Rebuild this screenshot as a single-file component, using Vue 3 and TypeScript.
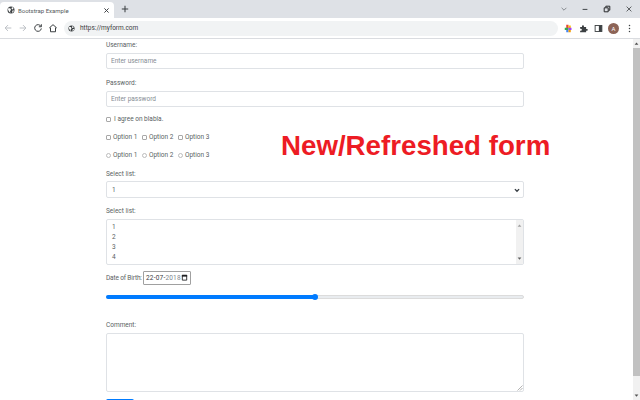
<script setup lang="ts">
const rows = ['Option 1', 'Option 2', 'Option 3']
</script>

<template>
  <div class="window">
    <div class="tabstrip">
      <div class="tab">
        <svg class="globe" viewBox="0 0 16 16"><circle cx="8" cy="8" r="7" fill="#3c4043"/><path d="M3 4l4 1 1 3-2 2 1 4-3-3-2-4zM10 2l3 2-1 3-3-1zM11 9l3 0-2 4-2 0z" fill="#fff"/></svg>
        <span class="tab-title">Bootstrap Example</span>
        <svg class="tab-x" viewBox="0 0 10 10"><path d="M2 2l6 6M8 2l-6 6" stroke="#3c4043" stroke-width="1.400"/></svg>
      </div>
      <svg class="plus" viewBox="0 0 10 10"><path d="M5 1v8M1 5h8" stroke="#3c4043" stroke-width="1.300"/></svg>
      <div class="spacer"></div>
      <svg class="win chev" viewBox="0 0 10 10"><path d="M2 3.500l3 3 3-3" fill="none" stroke="#70757a" stroke-width="1"/></svg>
      <svg class="win min" viewBox="0 0 10 10"><path d="M2 5.500h6" stroke="#3c4043" stroke-width="1.200"/></svg>
      <svg class="win rest" viewBox="0 0 10 10"><path d="M3.500 3V1.500h5v5H7M1.500 3.500h5v5h-5z" fill="none" stroke="#202124" stroke-width="1.200"/></svg>
      <svg class="win close" viewBox="0 0 10 10"><path d="M2 2l6 6M8 2l-6 6" stroke="#3c4043" stroke-width="1"/></svg>
    </div>
    <div class="toolbar">
      <svg class="nav first" viewBox="0 0 12 12"><path d="M10 6H2.500M6 2.500L2.500 6 6 9.500" fill="none" stroke="#bdc1c6" stroke-width="1.200"/></svg>
      <svg class="nav" viewBox="0 0 12 12"><path d="M2 6h7.500M6 2.500L9.500 6 6 9.500" fill="none" stroke="#bdc1c6" stroke-width="1.200"/></svg>
      <svg class="nav" viewBox="0 0 12 12"><path d="M9.500 4A4 4 0 1 0 10 6.500M10 1.500v3H7" fill="none" stroke="#3c4043" stroke-width="1.200"/></svg>
      <svg class="nav" viewBox="0 0 12 12"><path d="M1.500 6L6 2l4.500 4M3 5.500V10.500h6V5.500" fill="none" stroke="#3c4043" stroke-width="1.200"/></svg>
      <div class="omnibox">
        <svg class="omni-globe" viewBox="0 0 16 16"><circle cx="8" cy="8" r="7" fill="#3c4043"/><path d="M3 4l4 1 1 3-2 2 1 4-3-3-2-4zM10 2l3 2-1 3-3-1zM11 9l3 0-2 4-2 0z" fill="#fff"/></svg>
        <span class="url">https://myform.com</span>
      </div>
      <svg class="ext" viewBox="0 0 12 12">
        <rect x="3" y="1" width="3" height="5" fill="#ea4335"/><rect x="6" y="2" width="3" height="4" fill="#fbbc04"/>
        <rect x="1" y="5" width="5" height="3" fill="#34a853"/><rect x="6" y="5" width="4" height="3" fill="#a142f4"/>
        <rect x="3" y="8" width="3" height="3" fill="#4285f4"/><rect x="6" y="8" width="3" height="3" fill="#f29900"/>
      </svg>
      <svg class="ext" viewBox="0 0 12 12"><path d="M1.500 4H4V3a1.300 1.300 0 0 1 2.600 0v1H9.500v2.500h1a1.300 1.300 0 0 1 0 2.600h-1V11H1.500V9h1a1.300 1.300 0 0 0 0-2.600h-1z" fill="#3c4043"/></svg>
      <svg class="ext panel" viewBox="0 0 12 12"><rect x="1.500" y="2" width="9" height="8" fill="none" stroke="#3c4043" stroke-width="1.200"/><rect x="6.500" y="2" width="4" height="8" fill="#3c4043"/></svg>
      <div class="avatar">A</div>
      <svg class="dots" viewBox="0 0 4 12"><circle cx="2" cy="2" r="1" fill="#3c4043"/><circle cx="2" cy="6" r="1" fill="#3c4043"/><circle cx="2" cy="10" r="1" fill="#3c4043"/></svg>
    </div>
    <div class="viewport">
      <div class="page">
        <form class="form">
          <label class="lab">Username:</label>
          <input class="ctl text" placeholder="Enter username" />
          <label class="lab">Password:</label>
          <input class="ctl text tight" placeholder="Enter password" />
          <label class="line agree"><input type="checkbox" class="box" /><span>I agree on blabla.</span></label>
          <div class="line opts">
            <label v-for="o in rows" :key="'c' + o" class="opt"><input type="checkbox" class="box" /><span>{{ o }}</span></label>
          </div>
          <div class="line opts">
            <label v-for="o in rows" :key="'r' + o" class="opt"><input type="radio" name="r" class="box round" /><span>{{ o }}</span></label>
          </div>
          <label class="lab after-opts">Select list:</label>
          <div class="ctl selectbox">
            <span>1</span>
            <svg class="caret" viewBox="0 0 10 10"><path d="M1.500 3.500L5 7l3.500-3.500" fill="none" stroke="#343a40" stroke-width="2.200"/></svg>
          </div>
          <label class="lab">Select list:</label>
          <div class="ctl listbox">
            <div class="items"><div>1</div><div>2</div><div>3</div><div>4</div></div>
            <div class="list-scroll">
              <svg viewBox="0 0 6 4"><path d="M3 .5L5.500 3.500H.5z" fill="#a0a0a0"/></svg>
              <svg viewBox="0 0 6 4"><path d="M3 3.500L5.500 .5H.5z" fill="#606060"/></svg>
            </div>
          </div>
          <div class="dob">
            <span class="dob-label">Date of Birth:</span>
            <div class="date">
              <span class="date-val">22-07-<span class="year">2018</span></span>
              <svg class="cal" viewBox="0 0 8 8"><path d="M1.500 1.500h5v5.500h-5z" fill="none" stroke="#202124" stroke-width="1"/><path d="M1 1h6v2H1z" fill="#202124"/></svg>
            </div>
          </div>
          <div class="range"><div class="range-fill"></div><div class="range-thumb"></div></div>
          <label class="lab comment">Comment:</label>
          <div class="ctl area">
            <svg class="grip" viewBox="0 0 6 6"><path d="M5.500 .5L.5 5.500M5.500 3L3 5.500" stroke="#a0a0a0" stroke-width=".8"/></svg>
          </div>
          <div class="submit"></div>
        </form>
      </div>
      <div class="headline">New/Refreshed form</div>
      <div class="scrollbar">
        <svg class="sb-arrow" viewBox="0 0 6 4"><path d="M3 .5L5.500 3.500H.5z" fill="#505050"/></svg>
        <div class="thumb"></div>
        <div class="track"></div>
        <svg class="sb-arrow" viewBox="0 0 6 4"><path d="M3 3.500L5.500 .5H.5z" fill="#505050"/></svg>
      </div>
    </div>
  </div>
</template>

<style>
html, body { margin: 0; background: #fff; }
</style>

<style scoped>
.window { width: 640px; height: 400px; overflow: hidden; display: flex; flex-direction: column; font-family: Roboto, "Open Sans", sans-serif; color: #212529; background: #fff; }
.tabstrip { height: 18px; flex: none; background: #dee1e6; display: flex; align-items: center; }
.tab { width: 114px; height: 16px; margin-top: 2px; background: #fff; border-radius: 4px 4px 0 0; display: flex; align-items: center; box-sizing: border-box; padding: 0 4px 0 7px; }
.globe { width: 8px; height: 8px; }
.tab-title { font-size: 6px; color: #55595d; margin-left: 3px; flex: 1; white-space: nowrap; }
.tab-x { width: 7px; height: 7px; }
.plus { width: 8px; height: 8px; margin-left: 7px; }
.spacer { flex: 1; }
.win { width: 8px; height: 8px; }
.chev { margin-right: 13px; }
.min { margin-right: 14px; }
.rest { margin-right: 14px; }
.close { margin-right: 7px; }
.toolbar { height: 21px; flex: none; background: #fff; border-bottom: 1px solid #dadce0; box-sizing: border-box; display: flex; align-items: center; }
.nav { width: 10px; height: 10px; margin-right: 5px; flex: none; }
.nav.first { margin-left: 3px; }
.omnibox { width: 494px; height: 15px; margin-left: 1px; background: #f1f3f4; border-radius: 8px; display: flex; align-items: center; padding-left: 4px; box-sizing: border-box; margin-right: 6px; flex: none; }
.omni-globe { width: 7px; height: 7px; }
.url { font-size: 6.500px; color: #3c4043; margin-left: 5px; }
.ext { width: 9px; height: 9px; margin-right: 6px; flex: none; }
.ext.panel { margin-right: 5px; }
.avatar { width: 11px; height: 11px; border-radius: 50%; background: #8d6457; color: #fff; font-size: 6px; line-height: 11px; text-align: center; margin-right: 9px; flex: none; }
.dots { width: 3px; height: 9px; flex: none; }
.viewport { flex: 1; position: relative; display: flex; overflow: hidden; min-height: 0; }
.page { flex: 1; min-width: 0; padding-left: 106px; }
.form { width: 418px; display: flex; flex-direction: column; font-size: 6.500px; color: #5a5f64; }
.lab { height: 14px; line-height: 12px; display: block; }
.ctl { box-sizing: border-box; width: 418px; border: 1px solid #dfe2e6; border-radius: 2px; background: #fff; font-family: inherit; font-size: 6.500px; color: #5a5f64; flex: none; }
.text { height: 16px; padding: 0 4px; margin-bottom: 8px; outline: none; }
.text.tight { margin-bottom: 3px; }
.text::placeholder { color: #868d94; opacity: 1; }
.line { display: flex; align-items: center; height: 18px; }
.agree { gap: 3px; }
.opts { gap: 5px; }
.opt { display: flex; align-items: center; gap: 2px; width: 31px; white-space: nowrap; }
.box { appearance: none; box-sizing: border-box; width: 5px; height: 5px; margin: 0; flex: none; border: 1px solid #a8a8a8; border-radius: 1px; background: #fff; }
.box.round { border-radius: 50%; border-color: #bcbcbc; }
.after-opts { margin-top: 4px; }
.selectbox { height: 17px; padding: 0 5px; display: flex; align-items: center; justify-content: space-between; margin-bottom: 7px; margin-top: -1px; }
.caret { width: 6px; height: 6px; margin-right: -2px; }
.listbox { height: 46px; display: flex; justify-content: space-between; margin-bottom: 5px; overflow: hidden; }
.items { padding: 2px 5px; line-height: 10px; }
.list-scroll { width: 7px; background: #f1f1f1; display: flex; flex-direction: column; justify-content: space-between; align-items: center; padding: 4px 0; box-sizing: border-box; }
.list-scroll svg { width: 5px; height: 3px; }
.dob { display: flex; align-items: center; gap: 1px; height: 15px; white-space: nowrap; }
.dob-label { width: 36px; letter-spacing: -.15px; }
.date { width: 48px; height: 14px; box-sizing: border-box; border: 1px solid #a0a0a0; border-radius: 1px; display: flex; align-items: center; justify-content: space-between; padding: 0 2px; font-size: 6.500px; font-weight: 400; color: #3c4043; }
.date-val { letter-spacing: .2px; }
.year { color: #7d848b; }
.cal { width: 7px; height: 7px; flex: none; }
.range { position: relative; width: 418px; height: 4px; margin-top: 10px; background: #e9ecef; border: 1px solid #dcdcdc; border-radius: 2px; box-sizing: border-box; flex: none; }
.range-fill { width: 209px; height: 4px; margin: -1px 0 0 -1px; background: #007bff; border-radius: 2px; }
.range-thumb { position: absolute; left: 205px; top: -2px; width: 6px; height: 6px; border-radius: 50%; background: #007bff; }
.comment { margin-top: 20px; }
.area { height: 59px; position: relative; }
.grip { position: absolute; right: 0; bottom: 0; width: 6px; height: 6px; }
.submit { width: 28px; height: 10px; background: #007bff; border-radius: 2px 2px 0 0; margin-top: 7px; flex: none; }
.headline { position: absolute; left: 281px; top: 91px; font-family: "Liberation Sans", Arial, sans-serif; font-weight: 700; font-size: 27.700px; line-height: 32px; color: #ed1c24; white-space: nowrap; }
.scrollbar { width: 7px; flex: none; background: #f1f1f1; display: flex; flex-direction: column; align-items: center; }
.sb-arrow { width: 5px; height: 3px; margin: 3px 0; flex: none; }
.thumb { width: 100%; height: 328px; background: #c1c1c1; flex: none; }
.track { flex: 1; }
</style>
